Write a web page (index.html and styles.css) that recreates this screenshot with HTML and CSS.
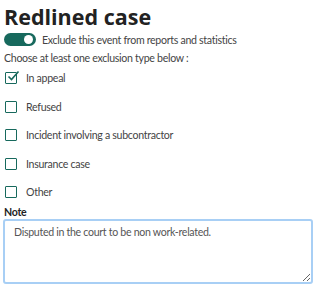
FILE: index.html
```html
<!DOCTYPE html>
<html lang="en">
<head>
    <meta charset="UTF-8">
    <meta name="viewport" content="width=device-width, initial-scale=1.0">
    <title>Redlined case</title>
    <link rel="stylesheet" href="styles.css">
</head>
<body>
    <div class="panel">
        <h1>Redlined case</h1>
        <label class="toggle-row">
            <span class="toggle on"><span class="knob"></span></span>
            <span>Exclude this event from reports and statistics</span>
        </label>
        <p class="hint">Choose at least one exclusion type below :</p>
        <ul class="types">
            <li>
                <span class="box checked">
                    <svg width="16" height="16" viewBox="0 0 16 16"><path d="M3.5 7.5 L6.5 10.5 L13.5 2.5" fill="none" stroke="#17695d" stroke-width="1.6"/></svg>
                </span>
                In appeal
            </li>
            <li><span class="box"></span>Refused</li>
            <li><span class="box"></span>Incident involving a subcontractor</li>
            <li><span class="box"></span>Insurance case</li>
            <li><span class="box"></span>Other</li>
        </ul>
        <label class="note-label" for="note">Note</label>
        <textarea id="note">Disputed in the court to be non work-related.</textarea>
    </div>
</body>
</html>
```

FILE: styles.css
```css
body {
    font-family: Lato, "Open Sans", sans-serif;
    color: #333;
    background: #fff;
    margin: 0;
    letter-spacing: -0.3px;
}
.panel {
    padding: 3px 4px 0 4px;
}
h1 {
    font-family: "Open Sans", sans-serif;
    font-size: 21.5px;
    font-weight: 700;
    color: #222;
    margin: 0;
    line-height: 28px;
    letter-spacing: 0;
}
.toggle-row {
    display: flex;
    align-items: center;
    gap: 6px;
    font-size: 10.6px;
    color: #444;
    margin-top: 2px;
}
.toggle {
    width: 32px;
    height: 13px;
    border-radius: 7px;
    background: #17695d;
    position: relative;
}
.knob {
    position: absolute;
    right: 3px;
    top: 2px;
    width: 9px;
    height: 9px;
    border-radius: 50%;
    background: #fff;
}
.hint {
    font-size: 10.6px;
    color: #444;
    margin: 6px 0 0 0;
}
.types {
    list-style: none;
    margin: 0;
    padding: 0;
}
.types li {
    display: flex;
    align-items: center;
    gap: 9px;
    height: 28.5px;
    font-size: 10.6px;
    color: #444;
}
.box {
    width: 10px;
    height: 10px;
    border: 1.5px solid #17695d;
    border-radius: 1px;
    margin-left: 1px;
    position: relative;
}
.box svg {
    position: absolute;
    left: -1px;
    top: -4px;
}
.note-label {
    display: block;
    font-size: 10.6px;
    font-weight: 700;
    color: #222;
    margin-top: -1px;
}
textarea {
    display: block;
    width: 310px;
    height: 65px;
    margin-top: 1px;
    margin-left: -1px;
    box-sizing: border-box;
    border: 2px solid #a8cff5;
    border-radius: 3px;
    padding: 5px 9px;
    font-family: inherit;
    font-size: 10.6px;
    letter-spacing: -0.3px;
    color: #555;
    resize: vertical;
}
```
